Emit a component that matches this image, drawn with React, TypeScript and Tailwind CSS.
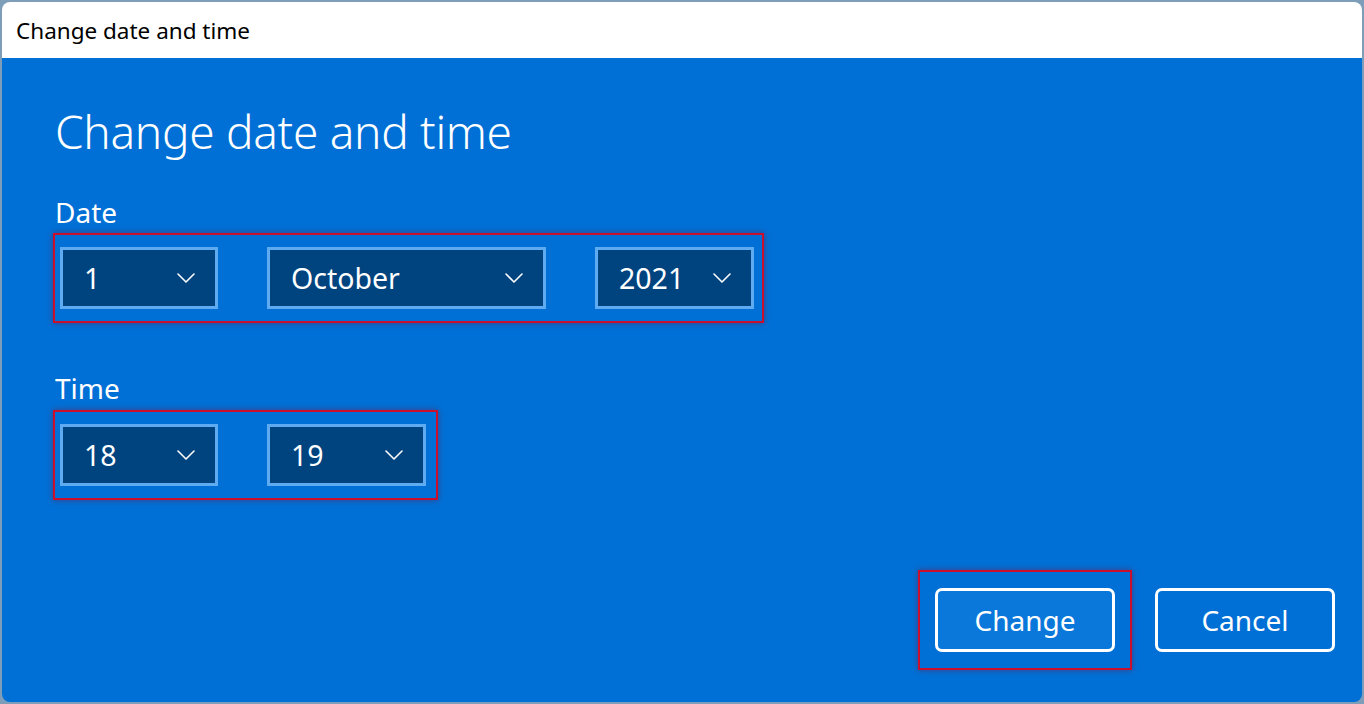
import React from 'react'

// Windows 11 "Change date and time" dialog, with red annotation boxes

const FONT = { fontFamily: '"Noto Sans", "Open Sans", Arial, sans-serif' }

function Chevron() {
  return (
    <svg width="18" height="10" viewBox="0 0 18 10" fill="none" className="shrink-0">
      <path d="M1 1 L9 9 L17 1" stroke="white" strokeWidth="1.6" strokeLinecap="round" strokeLinejoin="round" />
    </svg>
  )
}

function Select({ value, width }: { value: string; width: string }) {
  return (
    <div
      className={`${width} h-[62px] border-[3px] border-[#5fabf2] bg-[#00447f] flex items-center justify-between pl-[21px] pr-[20px] text-white text-[28.5px]`}
    >
      <span className="leading-none">{value}</span>
      <Chevron />
    </div>
  )
}

function Highlight({ children, className }: { children: React.ReactNode; className?: string }) {
  return (
    <div
      className={`border-2 border-[#c8102e] shadow-[0_0_6px_rgba(120,20,60,0.55)] ${className ?? ''}`}
    >
      {children}
    </div>
  )
}

export default function App() {
  return (
    <div className="w-[1364px] h-[704px] bg-[#7e9db8] p-[2px]" style={FONT}>
      <div className="w-full h-full rounded-[8px] overflow-hidden flex flex-col">
        {/* Title bar */}
        <div className="h-[56px] bg-white flex items-center pl-[14px] pt-[2px] text-[22.5px] text-black">
          Change date and time
        </div>

        {/* Body */}
        <div className="flex-1 bg-[#0070d6] flex flex-col text-white">
          <h1 className="pl-[53px] pt-[50px] text-[46px] font-light leading-none tracking-[-0.3px]">
            Change date and time
          </h1>

          <div className="pl-[53px] pt-[44px] text-[28px] leading-none">Date</div>
          <div className="pl-[51px] pt-[7px] flex">
            <Highlight className="flex gap-[49px] px-[5px] pt-[12px] pb-[12px] pr-[8px]">
              <Select value="1" width="w-[158px]" />
              <Select value="October" width="w-[279px]" />
              <Select value="2021" width="w-[159px]" />
            </Highlight>
          </div>

          <div className="pl-[53px] pt-[51px] text-[28px] leading-none">Time</div>
          <div className="pl-[51px] pt-[8px] flex">
            <Highlight className="flex gap-[49px] px-[5px] pt-[12px] pb-[12px] pr-[10px]">
              <Select value="18" width="w-[158px]" />
              <Select value="19" width="w-[159px]" />
            </Highlight>
          </div>

          {/* Buttons */}
          <div className="flex-1 flex items-end justify-end pr-[27px] pb-[32px] gap-[23px]">
            <Highlight className="px-[15px] py-[16px]">
              <button className="w-[180px] h-[64px] rounded-[7px] border-[3px] border-white bg-[#0a78da] text-white text-[28px]">
                Change
              </button>
            </Highlight>
            <div className="py-[18px]">
              <button className="w-[180px] h-[64px] rounded-[7px] border-[3px] border-white bg-transparent text-white text-[28px]">
                Cancel
              </button>
            </div>
          </div>
        </div>
      </div>
    </div>
  )
}
